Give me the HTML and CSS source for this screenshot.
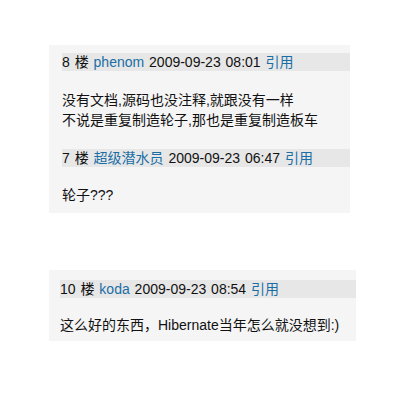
FILE: index.html
```html
<!DOCTYPE html>
<html>
<head>
<meta charset="utf-8">
<link rel="stylesheet" href="styles.css">
</head>
<body>
<div class="page">
  <div class="card card-a">
    <div class="head">8 楼 <a class="user">phenom</a> 2009-09-23 08:01 <a class="quote">引用</a></div>
    <p class="body">没有文档,源码也没注释,就跟没有一样<br>不说是重复制造轮子,那也是重复制造板车</p>
    <div class="head">7 楼 <a class="user">超级潜水员</a> 2009-09-23 06:47 <a class="quote">引用</a></div>
    <p class="body last">轮子???</p>
  </div>
  <div class="card card-b">
    <div class="head">10 楼 <a class="user">koda</a> 2009-09-23 08:54 <a class="quote">引用</a></div>
    <p class="body last">这么好的东西，Hibernate当年怎么就没想到:)</p>
  </div>
</div>
</body>
</html>
```
FILE: styles.css
```css
html, body {
  margin: 0;
  padding: 0;
  background: #ffffff;
}
.page {
  display: flex;
  flex-direction: column;
  align-items: flex-start;
  padding: 45px 0 0 49px;
  font-family: "Liberation Sans", Arial, "Noto Sans CJK SC", sans-serif;
  font-size: 14px;
  color: #111111;
}
.card {
  background: #f5f5f5;
  box-sizing: border-box;
}
.card-a {
  width: 301px;
  padding: 8px 0 0 13px;
}
.card-b {
  width: 307px;
  margin-top: 57px;
  padding: 10px 0 0 11px;
}
.head {
  background: #e7e7e7;
  height: 18px;
  line-height: 18px;
  white-space: nowrap;
  word-spacing: 1px;
}
.user, .quote {
  color: #1b6ea5;
  text-decoration: none;
}
.body {
  margin: 19px 0 19px 0;
  line-height: 20px;
  white-space: nowrap;
}
.card-a .body.last {
  margin: 18px 0 0 0;
  padding-bottom: 8px;
}
.card-b .body.last {
  margin: 17px 0 0 0;
  padding-bottom: 6px;
}
```
